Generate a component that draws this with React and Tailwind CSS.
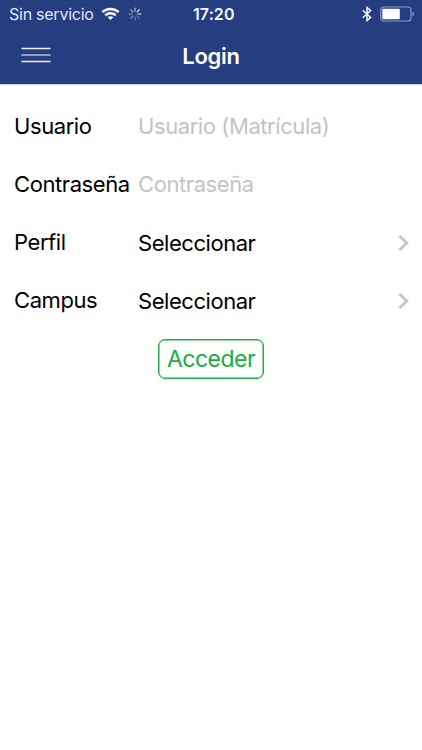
import React from "react";

const spokes = [
  [0, 0.75], [45, 0.95], [90, 0.9], [135, 0.3], [180, 0.4], [225, 0.45], [270, 0.5], [315, 0.6],
];

function StatusBar() {
  return (
    <div className="flex h-7 items-center text-[#f4f7ff]">
      <span className="ml-[9px] w-[92px] whitespace-nowrap text-[16px] leading-7 tracking-[-0.25px] text-[#dfe6fa]">Sin servicio</span>
      <svg className="h-[14px] w-[19px]" viewBox="0 0 20 14" fill="none" stroke="currentColor" strokeWidth="2.6">
        <path d="M1.4 5.1C6.1.5 13.9.5 18.6 5.1" />
        <path d="M4.5 8.4c3-2.9 8-2.9 11 0" />
        <path d="M10 13.4 7 10.5c1.7-1.5 4.3-1.5 6 0Z" fill="currentColor" stroke="none" />
      </svg>
      <svg className="ml-[8px] h-[14px] w-[14px]" viewBox="0 0 14 14" stroke="currentColor" strokeWidth="1.1" strokeLinecap="round">
        {spokes.map(([angle, opacity]) => (
          <line key={angle} x1="7" y1="1" x2="7" y2="4.2" opacity={opacity} transform={`rotate(${angle} 7 7)`} />
        ))}
      </svg>
      <span className="ml-[51px] w-[44px] whitespace-nowrap text-[16px] font-semibold leading-7 tracking-[0.1px]">17:20</span>
      <svg className="ml-[125px] h-[16px] w-[10px]" viewBox="0 0 10 16" fill="none" stroke="currentColor" strokeWidth="1.5">
        <path d="M.8 4.2 8.6 11.4 5 14.5V1.5l3.6 3.1L.8 11.8" />
      </svg>
      <svg className="ml-[8px] h-[16px] w-[35px]" viewBox="0 0 35 16" fill="none">
        <rect x=".7" y="1" width="30.3" height="14" rx="3" stroke="#8c9bc5" strokeWidth="1.2" />
        <rect x="2.3" y="2.8" width="17.5" height="10.4" rx="1" fill="white" />
        <path d="M32.5 5.5c2 .8 2 4.2 0 5Z" fill="#8c9bc5" />
      </svg>
    </div>
  );
}

function Row({ label, children }) {
  return (
    <div className="flex h-[58px] items-center pl-[14px] pr-[12px]">
      <label className="w-[124px] shrink-0 whitespace-nowrap pb-[2px]">{label}</label>
      {children}
    </div>
  );
}

function Select() {
  return (
    <button className="flex flex-1 items-center justify-between">
      <span className="tracking-[-0.45px]">Seleccionar</span>
      <svg className="h-[18px] w-[12px]" viewBox="0 0 12 18" fill="none" stroke="#c5c5ca" strokeWidth="3.1">
        <path d="m1.5 2 7.2 7-7.2 7" />
      </svg>
    </button>
  );
}

export default function App() {
  return (
    <div className="flex h-[750px] w-[422px] flex-col overflow-hidden bg-white font-['Inter',sans-serif] text-[22px] leading-7 tracking-[-0.42px] text-black">
      <header className="h-[85px] border-b border-[#c9cfe2] bg-[#253e80]">
        <StatusBar />
        <div className="grid h-14 grid-cols-3 items-center">
          <button className="mb-[2px] ml-[21px] w-[30px]" aria-label="Menú">
            <svg className="block h-[16px] w-[30px]" viewBox="0 0 30 16" strokeWidth="1.3">
              <path d="M.5 1.5h29M.5 14.5h29" stroke="#eef2ff" />
              <path d="M.5 8h29" stroke="#c8d2ee" />
            </svg>
          </button>
          <h1 className="text-center text-[22px] font-semibold tracking-[-0.3px] text-white">Login</h1>
        </div>
      </header>
      <main className="flex flex-col pt-[13px]">
        <Row label="Usuario">
          <input className="min-w-0 flex-1 pb-[2px] outline-none placeholder:text-[#c3c3c5] placeholder:opacity-100" placeholder="Usuario (Matrícula)" />
        </Row>
        <Row label="Contraseña">
          <input type="password" className="min-w-0 flex-1 pb-[2px] outline-none placeholder:text-[#c3c3c5] placeholder:opacity-100" placeholder="Contraseña" />
        </Row>
        <Row label="Perfil"><Select /></Row>
        <Row label="Campus"><Select /></Row>
        <button className="ml-[158px] mt-[9px] flex h-10 w-[106px] items-center justify-center rounded-[7px] border border-[#20ae48] text-[23px] tracking-[-0.5px] text-[#16ad42] shadow-[inset_0_0_0_0.5px_#20ae48]">
          Acceder
        </button>
      </main>
    </div>
  );
}
